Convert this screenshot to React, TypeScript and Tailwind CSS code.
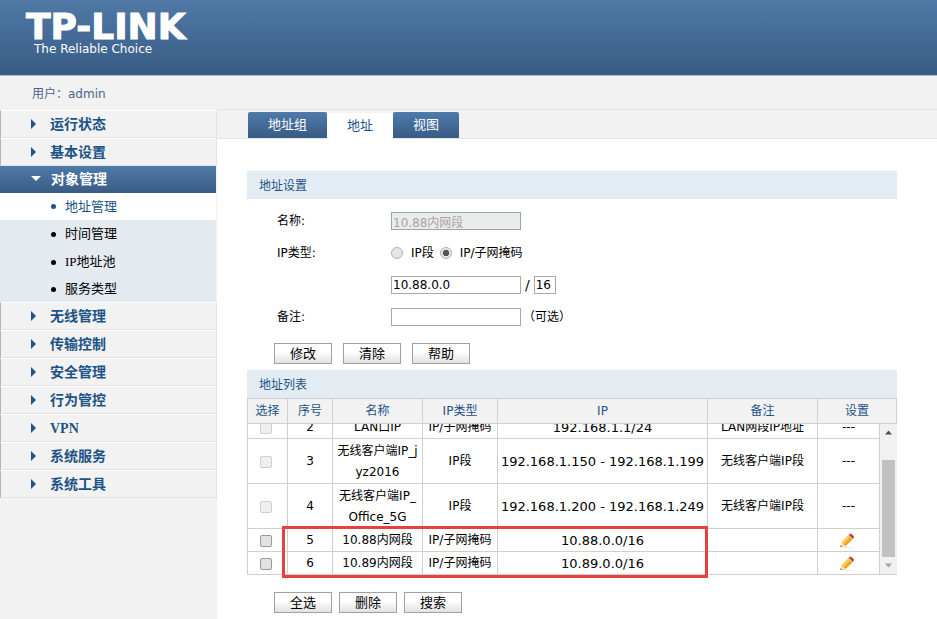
import { useState } from 'react';

interface AddressRow {
  id: number;
  name: string[];
  type: string;
  ip: string;
  remark: string;
  editable: boolean;
}

const rows: AddressRow[] = [
  { id: 2, name: ['LAN口IP'], type: 'IP/子网掩码', ip: '192.168.1.1/24', remark: 'LAN网段IP地址', editable: false },
  { id: 3, name: ['无线客户端IP_j', 'yz2016'], type: 'IP段', ip: '192.168.1.150 - 192.168.1.199', remark: '无线客户端IP段', editable: false },
  { id: 4, name: ['无线客户端IP_', 'Office_5G'], type: 'IP段', ip: '192.168.1.200 - 192.168.1.249', remark: '无线客户端IP段', editable: false },
  { id: 5, name: ['10.88内网段'], type: 'IP/子网掩码', ip: '10.88.0.0/16', remark: '', editable: true },
  { id: 6, name: ['10.89内网段'], type: 'IP/子网掩码', ip: '10.89.0.0/16', remark: '', editable: true },
];

const menu = [
  { label: '运行状态' },
  { label: '基本设置' },
  { label: '对象管理', children: ['地址管理', '时间管理', 'IP地址池', '服务类型'] },
  { label: '无线管理' },
  { label: '传输控制' },
  { label: '安全管理' },
  { label: '行为管控' },
  { label: 'VPN' },
  { label: '系统服务' },
  { label: '系统工具' },
];

const tabs = ['地址组', '地址', '视图'];

const inputClass = 'h-[18px] border border-[#a9a9a9] bg-white px-px text-[12px] leading-4 outline-none';
const radioClass =
  'w-3 h-3 appearance-none rounded-full border border-[#b0b0b0] bg-[#e6e6e6] checked:bg-[radial-gradient(circle,#555_0_3px,#e6e6e6_3px)]';

const PushButton = ({ label }: { label: string }) => (
  <button
    type="button"
    className="w-[58px] h-[21px] border border-[#a0a0a0] bg-linear-to-b from-white from-40% to-[#e2e2e2] text-[13px] leading-5"
  >
    {label}
  </button>
);

const SectionTitle = ({ children }: { children: string }) => (
  <h2 className="h-7 bg-[#e3ecf2] pl-3 text-[12px] leading-[30px] text-[#1c5387]">{children}</h2>
);

const Pencil = () => (
  <svg viewBox="0 0 16 16" className="w-4 h-4" aria-hidden="true">
    <ellipse cx="8" cy="14.4" rx="5" ry="0.8" fill="#eeeeee" />
    <path d="M1.4 14 2.4 9.4 9 2.6 13.2 6.6 6.4 13z" fill="#f6ae35" />
    <path d="M2.6 9.4 9 2.6l1.5 1.5-6.6 6.7z" fill="#fcd06a" />
    <path d="M5.3 12 12 5.4l1.2 1.2L6.4 13z" fill="#ee9a25" />
    <path d="M1.4 14l1-4.6 1.5.9.6 1.3 1.9 1.4z" fill="#fbe3b0" />
    <path d="m1.4 14 .4-1.700 1.300 1.300z" fill="#6a4a22" />
    <path d="m9 2.6 1-1 4.1 4-1 1z" fill="#e9b27a" />
    <path d="m9.8 1.8.8-.8c.7-.5 1.500-.5 2.100.1l1.900 1.900c.6.6.5 1.400 0 1.900l-.8.8z" fill="#b04f2a" />
  </svg>
);

const Columns = ({ last }: { last: string }) => (
  <colgroup>
    <col className="w-[40px]" />
    <col className="w-[45px]" />
    <col className="w-[90px]" />
    <col className="w-[75px]" />
    <col />
    <col className="w-[110px]" />
    <col className={last} />
  </colgroup>
);

const Sidebar = () => (
  <aside className="w-[217px] shrink-0 bg-[#f2f2f2]">
    <p className="h-[34px] pl-8 text-[12px] leading-[36px] text-[#4a6488]">用户：admin</p>
    <nav className="font-['Liberation_Serif','Noto_Sans_CJK_SC',serif]">
      <ul>
        {menu.map(item => (
          <li key={item.label}>
            <a
              href="#"
              className={`flex items-center text-[14px] font-bold ${
                item.children
                  ? 'mr-px h-[27px] bg-linear-to-b from-[#4f7aa9] to-[#385c84] pl-[31px] text-white'
                  : 'h-7 border-t border-r border-b border-l border-t-white border-r-[#e0e2e4] border-b-[#e0e2e4] border-l-[#b4b4b4] pl-[29px] text-[#1c5387]'
              }`}
            >
              <svg viewBox="0 0 10 10" className="w-2.5 h-2.5 mr-[10px]" aria-hidden="true">
                <path d={item.children ? 'M0 1h10L5 6z' : 'M1 0v10l5-5z'} fill="currentColor" />
              </svg>
              {item.label}
            </a>
            {item.children && (
              <ul className="mr-px bg-[#e3ebf0] text-[13px]">
                {item.children.map((child, idx) => (
                  <li key={child} className="h-7 first:h-[27px] last:h-[26px]">
                    <a
                      href="#"
                      className={`flex h-full items-center gap-[9px] pl-[51px] ${
                        idx === 0 ? 'bg-white text-[#1c5387]' : 'text-black'
                      }`}
                    >
                      <span className="w-[5px] h-[5px] rounded-full bg-current" />
                      {child}
                    </a>
                  </li>
                ))}
              </ul>
            )}
          </li>
        ))}
      </ul>
    </nav>
  </aside>
);

const AddressForm = () => {
  const [mode, setMode] = useState('mask');

  return (
    <form>
      <div className="pt-1.5 pl-[30px]">
        <div className="flex h-8 items-center">
          <label htmlFor="name" className="w-[114px]">名称:</label>
          <input
            id="name"
            defaultValue="10.88内网段"
            disabled
            className="h-[18px] w-[130px] border border-[#8fa5b8] bg-[#ebebe9] px-px text-[12px] leading-4 text-[#a5a5a5]"
          />
        </div>
        <div className="flex h-8 items-center">
          <span className="w-[114px]">IP类型:</span>
          <label className="mr-1.5 flex items-center gap-2">
            <input type="radio" name="mode" checked={mode === 'range'} onChange={() => setMode('range')} className={radioClass} />
            IP段
          </label>
          <label className="flex items-center gap-2">
            <input type="radio" name="mode" checked={mode === 'mask'} onChange={() => setMode('mask')} className={radioClass} />
            IP/子网掩码
          </label>
        </div>
        <div className="flex h-8 items-center pl-[114px]">
          <input aria-label="IP" defaultValue="10.88.0.0" className={`${inputClass} w-[130px]`} />
          <span className="px-1 text-[14px]">/</span>
          <input aria-label="子网掩码" defaultValue="16" className={`${inputClass} w-[22px]`} />
        </div>
        <div className="flex h-8 items-center">
          <label htmlFor="remark" className="w-[114px]">备注:</label>
          <input id="remark" className={`${inputClass} w-[130px]`} />
          <span className="pl-0.5">（可选）</span>
        </div>
      </div>
      <div className="flex gap-[11px] pt-2.5 pb-1.5 pl-[27px]">
        <PushButton label="修改" />
        <PushButton label="清除" />
        <PushButton label="帮助" />
      </div>
    </form>
  );
};

const AddressTable = () => (
  <div className="relative">
    <table className="w-full table-fixed border-separate border-spacing-0 border-t border-l border-[#cfcfcf] bg-[#f2f2f2]">
      <Columns last="w-[79px]" />
      <thead>
        <tr className="h-[25px]">
          {['选择', '序号', '名称', 'IP类型', 'IP', '备注', '设置'].map(title => (
            <th key={title} className="border-r border-b border-[#cfcfcf] p-0 font-normal text-[#1c5387]">
              {title}
            </th>
          ))}
        </tr>
      </thead>
    </table>
    <div className="flex h-[151px] border-l border-[#cfcfcf]">
      {/* list is scrolled to its end */}
      <div className="flex flex-1 flex-col justify-end overflow-hidden">
        <table className="w-full table-fixed border-separate border-spacing-0 text-center leading-[21px] [&_td]:border-r [&_td]:border-b [&_td]:border-[#cfcfcf] [&_td]:p-0 [&_td]:pt-px">
          <Columns last="w-[62px]" />
          <tbody>
            {rows.map(row => (
              <tr key={row.id} className={row.name.length > 1 ? 'h-[45px]' : 'h-[23px]'}>
                <td>
                  <input
                    type="checkbox"
                    aria-label={`选择 ${row.id}`}
                    disabled={!row.editable}
                    className="ml-3 block w-3 h-3 appearance-none rounded-xs border border-[#9a9a9a] bg-[#e2e2e2] checked:bg-[#555] disabled:border-[#d0d0d0] disabled:bg-[#efefef]"
                  />
                </td>
                <td>{row.id}</td>
                <td>
                  {row.name.map(line => (
                    <span key={line} className="block whitespace-nowrap">{line}</span>
                  ))}
                </td>
                <td className="whitespace-nowrap">{row.type}</td>
                <td className="text-[13px] whitespace-nowrap">{row.ip}</td>
                <td>{row.remark}</td>
                <td>
                  {row.editable ? (
                    <button type="button" aria-label="编辑" className="ml-[21px] block">
                      <Pencil />
                    </button>
                  ) : (
                    '---'
                  )}
                </td>
              </tr>
            ))}
          </tbody>
        </table>
      </div>
      <div className="flex w-[17px] flex-col items-center border-b border-[#cfcfcf] bg-[#f1f1f1]">
        <svg viewBox="0 0 17 17" className="w-[17px] h-[17px]" aria-hidden="true">
          <path d="M5 10.5h7L8.5 6.5z" fill="#505050" />
        </svg>
        <div className="mt-[19px] w-[13px] flex-1 bg-[#c1c1c1]" />
        <svg viewBox="0 0 17 17" className="w-[17px] h-[17px]" aria-hidden="true">
          <path d="M5 6.5h7L8.5 10.5z" fill="#a3a3a3" />
        </svg>
      </div>
    </div>
    <div className="pointer-events-none absolute -bottom-[3px] left-[35px] right-[189px] h-[52px] border-3 border-[#e8403f]" />
  </div>
);

export default function App() {
  const [activeTab, setActiveTab] = useState('地址');

  return (
    <div className="flex min-h-screen flex-col bg-white font-['DejaVu_Sans','Noto_Sans_CJK_SC',sans-serif] text-[12px] text-black">
      {/* Header */}
      <header className="h-[76px] border-b border-[#a8bdd2] bg-linear-to-b from-[#5079a7] to-[#385c84] pt-3 pl-[26px] text-white">
        <h1 className="text-[36px] leading-[30px] font-bold [-webkit-text-stroke:1px_white]">TP-LINK</h1>
        <p className="pl-2 leading-[14px]">The Reliable Choice</p>
      </header>

      <div className="flex flex-1">
        <Sidebar />
        <main className="min-w-0 flex-1">
          <div className="h-[33px] bg-[#f2f2f2]" />
          <div className="flex h-[30px] items-end border-t border-b border-[#e4e4e4] bg-[#f2f2f2] pl-[31px]">
            {tabs.map(tab => (
              <button
                key={tab}
                type="button"
                onClick={() => setActiveTab(tab)}
                className={`h-[26px] rounded-t-xs px-5 text-[13px] leading-[26px] ${
                  activeTab === tab
                    ? '-mb-px bg-white text-[#1c5387]'
                    : 'bg-linear-to-b from-[#4f7aa9] to-[#385c84] text-white'
                }`}
              >
                {tab}
              </button>
            ))}
          </div>

          <div className="mt-8 mr-10 ml-[30px]">
            <SectionTitle>地址设置</SectionTitle>
            <AddressForm />
            <SectionTitle>地址列表</SectionTitle>
            <AddressTable />
            <div className="flex gap-[7px] pt-[17px] pl-[27px]">
              <PushButton label="全选" />
              <PushButton label="删除" />
              <PushButton label="搜索" />
            </div>
          </div>
        </main>
      </div>
    </div>
  );
}
